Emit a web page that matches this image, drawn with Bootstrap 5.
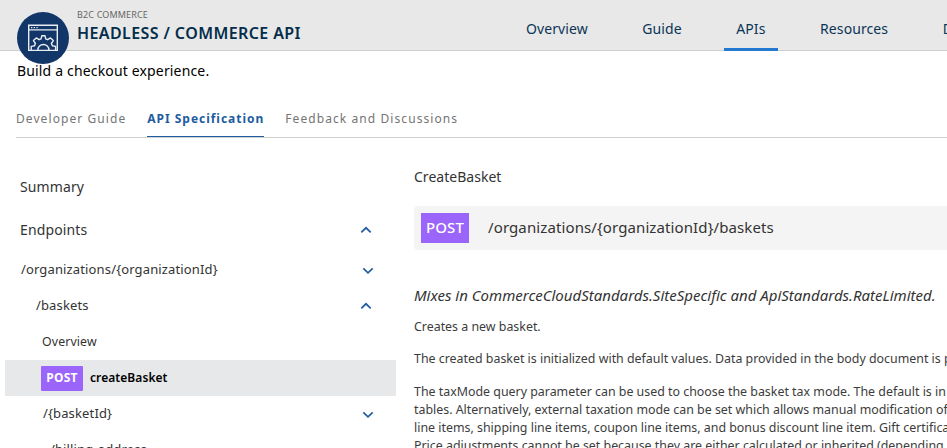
<!DOCTYPE html>
<html lang="en">
<head>
<meta charset="utf-8">
<title>Headless / Commerce API</title>
<link href="https://cdn.jsdelivr.net/npm/bootstrap@5.3.0/dist/css/bootstrap.min.css" rel="stylesheet">
<style>
body{font-family:"Noto Sans","Open Sans",sans-serif;color:#333;width:947px;height:448px}
.site-bar{height:51px;background:#e8e8e8;border-bottom:1px solid #cfcfcf;padding-left:17px}
.logo{width:52px;height:52px;margin:12px 8px 0 0;overflow:visible}
.kicker{font-size:9px;line-height:12px;letter-spacing:.15px;color:#666;margin-top:9px}
.product{font-size:16px;line-height:22px;font-weight:600;letter-spacing:.4px;color:#032d4a;margin:1px 0 0}
.top-links{gap:30.5px;padding-left:213px}
.top-links .nav-link{font-size:14px;line-height:20px;letter-spacing:.1px;color:#0b3556;padding:19px 12px 9px;height:51px;border-bottom:3px solid transparent}
.top-links .nav-link.active{border-color:#2378cf}
.tagline{font-size:14px;line-height:20px;letter-spacing:.16px;color:#000;margin:10px 0 0 17px}
.doc-tabs{gap:21px;margin:25px 0 0 16px;border-bottom:1px solid #d0d0d0;height:32px}
.doc-tabs .nav-link{font-size:12px;line-height:18px;letter-spacing:1.08px;color:#747474;padding:4px 0 8px;height:31px;border-bottom:1px solid transparent}
.doc-tabs .nav-link.active{font-weight:700;letter-spacing:.97px;color:#215ca0;border-color:#215ca0}
.side{width:391px;margin-left:5px;padding-top:27px}
.side-row{height:36px;font-size:13px;letter-spacing:.14px;padding-right:22px}
.side-head{height:43px;font-size:14px;letter-spacing:.12px;padding-left:15px;padding-right:24px}
.side-head + .side-row{margin-top:1px}
.open-row{padding-right:24px}
.lv1{padding-left:16px}.lv2{padding-left:31px}.lv3{padding-left:38px}.lv4{padding-left:45px}
.op{padding-left:36px}
.op-overview{font-size:12.3px;padding-left:37px}
.current{background:#e7e8ea;color:#000;font-weight:600;font-size:12px;letter-spacing:.07px}
.verb{background:#9b64fb;color:#fff;display:flex;align-items:center;justify-content:center}
.verb-sm{width:42px;height:25px;font-size:12px;font-weight:700;letter-spacing:.3px;border-radius:1px;margin-right:7px}
.verb-lg{width:48px;height:30px;font-size:15px;font-weight:500;line-height:28px;padding-bottom:2px;margin-right:19px}
.route{margin-top:-2px}
.chev{width:12px;height:8px;fill:none;stroke:#215ca0;stroke-width:1.7}
.spec{width:551px;margin-left:18px;padding-top:29px}
.spec-title{font-size:14px;line-height:20px;font-weight:400;letter-spacing:.02px;margin:0 0 19px}
.endpoint{height:44px;background:#f4f4f4;border-radius:4px 0 0 4px;padding-left:7px;font-size:15px;letter-spacing:.11px}
.mixes{font-size:15px;line-height:20px;margin:35px 0 13px}
.copy{font-size:12.4px;line-height:18px;margin:0 0 14.4px;color:#3c3c3c}
</style>
</head>
<body class="bg-white overflow-hidden">
<header class="site-bar d-flex text-nowrap">
  <svg class="logo flex-shrink-0" viewBox="0 0 52 52">
    <circle cx="26" cy="26" r="26" fill="#123668"/>
    <g fill="none" stroke="#e9edf3" stroke-width="1.4">
      <path d="M11.7 13.2h28.6v25.2H11.7zM12 17.9h28"/>
      <path d="M14 15.6h1.3M16.7 15.6h1.3M19.4 15.6h1.3" stroke-width="1.1"/>
      <path stroke-linejoin="round" d="M14.2 38v-3.6l3.3-.7.9-2.2-1.9-2.9 2.8-2.7 2.9 1.8 1.9-.8.7-3.2h3.2l.7 3.2 1.9.8 2.9-1.8 2.8 2.7-1.9 2.9.9 2.2 3.3.7V38"/>
      <path d="M20.9 38a5.5 5.5 0 0 1 11 0"/>
    </g>
  </svg>
  <div>
    <div class="kicker">B2C COMMERCE</div>
    <h1 class="product">HEADLESS / COMMERCE API</h1>
  </div>
  <nav class="nav top-links flex-nowrap">
    <a class="nav-link" href="#">Overview</a>
    <a class="nav-link" href="#">Guide</a>
    <a class="nav-link active" href="#">APIs</a>
    <a class="nav-link" href="#">Resources</a>
    <a class="nav-link" href="#">D</a>
  </nav>
</header>
<p class="tagline">Build a checkout experience.</p>
<nav class="nav doc-tabs flex-nowrap">
  <a class="nav-link" href="#">Developer Guide</a>
  <a class="nav-link active" href="#">API Specification</a>
  <a class="nav-link" href="#">Feedback and Discussions</a>
</nav>
<main class="d-flex text-nowrap">
  <aside class="side flex-shrink-0">
    <div class="side-head d-flex align-items-center">Summary</div>
    <div class="side-head d-flex align-items-center justify-content-between">Endpoints
      <svg class="chev" viewBox="0 0 12 8"><path d="M1.3 6.3 6 1.8l4.7 4.5"/></svg></div>
    <div class="side-row lv1 d-flex align-items-center justify-content-between">/organizations/{organizationId}
      <svg class="chev" viewBox="0 0 12 8"><path d="M1.3 2.3 6 6.8l4.7-4.5"/></svg></div>
    <div class="side-row open-row lv2 d-flex align-items-center justify-content-between">/baskets
      <svg class="chev" viewBox="0 0 12 8"><path d="M1.3 6.3 6 1.8l4.7 4.5"/></svg></div>
    <div class="side-row op op-overview d-flex align-items-center">Overview</div>
    <div class="side-row op current d-flex align-items-center"><span class="verb verb-sm">POST</span>createBasket</div>
    <div class="side-row lv3 d-flex align-items-center justify-content-between">/{basketId}
      <svg class="chev" viewBox="0 0 12 8"><path d="M1.3 2.3 6 6.8l4.7-4.5"/></svg></div>
    <div class="side-row lv4 d-flex align-items-center">/billing-address</div>
  </aside>
  <section class="spec flex-shrink-0">
    <h2 class="spec-title">CreateBasket</h2>
    <div class="endpoint d-flex align-items-center"><span class="verb verb-lg">POST</span><span class="route">/organizations/{organizationId}/baskets</span></div>
    <p class="mixes fst-italic">Mixes in CommerceCloudStandards.SiteSpecific and ApiStandards.RateLimited.</p>
    <p class="copy">Creates a new basket.</p>
    <p class="copy">The created basket is initialized with default values. Data provided in the body document is p</p>
    <p class="copy">The taxMode query parameter can be used to choose the basket tax mode. The default is in<br>tables. Alternatively, external taxation mode can be set which allows manual modification of<br>line items, shipping line items, coupon line items, and bonus discount line item. Gift certifica<br>Price adjustments cannot be set because they are either calculated or inherited (depending</p>
  </section>
</main>
<script src="https://cdn.jsdelivr.net/npm/bootstrap@5.3.0/dist/js/bootstrap.bundle.min.js"></script>
</body>
</html>
